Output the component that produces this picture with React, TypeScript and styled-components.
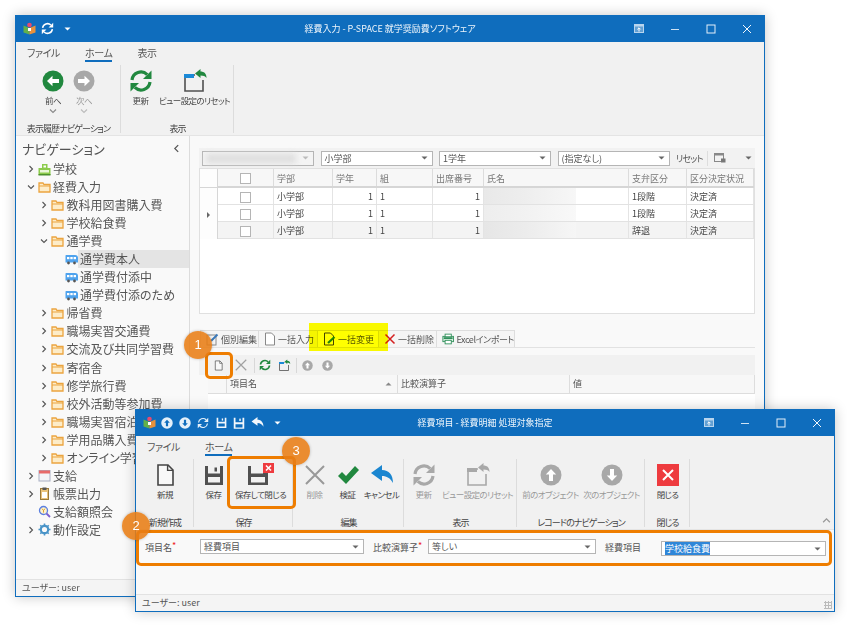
import React from 'react';
import styled, { createGlobalStyle } from 'styled-components';

const BLUE = '#0f6dbd';
const ORANGE = '#ee7d00';

const GlobalStyle = createGlobalStyle`
  html, body {
    margin: 0;
    padding: 0;
    background: #fff;
  }
  body {
    font-family: "Noto Sans CJK JP", "Noto Sans", sans-serif;
    font-feature-settings: "palt";
    color: #444;
    -webkit-font-smoothing: antialiased;
  }
`;

// Icons
//----------------------------------------------
const Logo = () => (
  <svg width="13" height="13" viewBox="0 0 13 13">
    <path d="M0.5 3.5 L6.5 6 V12.5 L0.5 10.5 Z" fill="#62b04a" />
    <path d="M12.5 3.5 L6.5 6 V12.5 L12.5 10.5 Z" fill="#e8913c" />
    <circle cx="6.5" cy="3" r="2.3" fill="#e84a6f" />
    <path d="M5 6 h3 v3 h-3 z" fill="#fff" />
  </svg>
);

const Refresh = ({ color = '#fff', size = 24, w = 3.2 }: { color?: string; size?: number; w?: number }) => (
  <svg width={size} height={size} viewBox="0 0 24 24" fill="none">
    <path d="M3 11 A9 9 0 0 1 18.2 5.6" stroke={color} strokeWidth={w} />
    <path d="M21 13 A9 9 0 0 1 5.8 18.4" stroke={color} strokeWidth={w} />
    <path d="M22.5 1.5 V10 H14 Z" fill={color} />
    <path d="M1.5 22.5 V14 H10 Z" fill={color} />
  </svg>
);

const ResetView = ({ color = '#505050', accent = '#1b8ad8', arrow = '#21883f', size = 26 }: { color?: string; accent?: string; arrow?: string; size?: number }) => (
  <svg width={size} height={size} viewBox="0 0 26 26" fill="none">
    <path d="M13 7 H3 V23 H21 V12" stroke={color} strokeWidth="1.6" />
    <rect x="2" y="6" width="10" height="4" fill={accent} />
    <path d="M13 5.5 L18.5 1 V3.6 C22 3.6 24.5 5.6 24.5 10 C23 8 21.5 7.4 18.5 7.4 V10 Z" fill={arrow} />
  </svg>
);

const ArrowCircle = ({ dir, color, size = 22, glyph = '#fff' }: { dir: 'left' | 'right' | 'up' | 'down'; color: string; size?: number; glyph?: string }) => {
  const rot = { left: 0, right: 180, up: 90, down: 270 }[dir];
  return (
    <svg width={size} height={size} viewBox="0 0 22 22">
      <circle cx="11" cy="11" r="10.5" fill={color} />
      <path
        d="M5 11 L10.5 5.8 V9 H17 V13 H10.5 V16.2 Z"
        fill={glyph}
        transform={`rotate(${rot} 11 11)`}
      />
    </svg>
  );
};

const DocIcon = ({ size = 24, color = '#444' }: { size?: number; color?: string }) => (
  <svg width={size} height={size} viewBox="0 0 24 24" fill="#f8f8f8">
    <path d="M5 2 H15 L20 7 V22 H5 Z" stroke={color} strokeWidth="1.6" />
    <path d="M14.6 2 V7.4 H20" stroke={color} strokeWidth="1.4" fill="none" />
  </svg>
);

const SaveIcon = ({ color = '#505050', size = 24 }: { color?: string; size?: number }) => (
  <svg width={size} height={size} viewBox="0 0 24 24">
    <path
      fillRule="evenodd"
      d="M3 3 H21 V22 H3 Z M6 3 H18 V10.5 H6 Z M6 14 V19.5 H18 V14 Z"
      fill={color}
    />
    <rect x="12.5" y="4.5" width="2.5" height="4" fill={color} />
  </svg>
);

const SaveCloseIcon = () => (
  <svg width="34" height="24" viewBox="0 0 34 24">
    <path
      fillRule="evenodd"
      d="M4 3 H24 V22 H4 Z M7 3 H19 V10.5 H7 Z M7 14 V19.5 H21 V14 Z"
      fill="#505050"
    />
    <rect x="19" y="0" width="11" height="10" fill="#ee3b3f" />
    <path d="M22 2.5 L27 7.5 M27 2.5 L22 7.5" stroke="#fff" strokeWidth="1.6" />
  </svg>
);

const CrossIcon = ({ color = '#999', size = 24, w = 2 }: { color?: string; size?: number; w?: number }) => (
  <svg width={size} height={size} viewBox="0 0 24 24">
    <path d="M3 3 L21 21 M21 3 L3 21" stroke={color} strokeWidth={w} fill="none" />
  </svg>
);

const CheckIcon = () => (
  <svg width="24" height="24" viewBox="0 0 24 24">
    <path d="M2 13 L6 9 L10 13 L19 3 L23 7 L10 21 Z" fill="#21883f" />
  </svg>
);

const UndoIcon = ({ color = '#1b86d0', size = 24 }: { color?: string; size?: number }) => (
  <svg width={size} height={size} viewBox="0 0 24 24">
    <path d="M1 10 L12 2 V7 C19 7 23 12 23 20 C20 15 17 13 12 13 V18 Z" fill={color} />
  </svg>
);

const CloseTile = () => (
  <svg width="22" height="22" viewBox="0 0 22 22">
    <rect width="22" height="22" fill="#ee3b3f" />
    <path d="M6 6 L16 16 M16 6 L6 16" stroke="#fff" strokeWidth="2" />
  </svg>
);

const Caret = ({ color = '#666', up }: { color?: string; up?: boolean }) => (
  <svg width="7" height="4" viewBox="0 0 7 4">
    <path d={up ? 'M0.5 3.5 H6.5 L3.5 0.5 Z' : 'M0.5 0.5 H6.5 L3.5 3.5 Z'} fill={color} />
  </svg>
);

const Chevron = ({ dir, color = '#555', size = 8 }: { dir: 'right' | 'down' | 'left' | 'up'; color?: string; size?: number }) => {
  const rot = { right: 0, down: 90, left: 180, up: 270 }[dir];
  return (
    <svg width={size} height={size} viewBox="0 0 8 8">
      <path
        d="M2.5 1 L5.5 4 L2.5 7"
        stroke={color}
        strokeWidth="1.1"
        fill="none"
        transform={`rotate(${rot} 4 4)`}
      />
    </svg>
  );
};

const Folder = () => (
  <svg width="13" height="12" viewBox="0 0 13 12">
    <path d="M1 2 H5 L6 3.5 H12 V11 H1 Z" fill="#fdecc8" stroke="#eba43f" strokeWidth="1.3" />
    <path d="M1 5 H12" stroke="#eba43f" strokeWidth="1" />
  </svg>
);

const Bus = () => (
  <svg width="13" height="11" viewBox="0 0 13 11">
    <path d="M1 1 H10 Q13 1 13 4 V8.5 H0.5 V1.5 Z" fill="#4fa3ee" />
    <rect x="2" y="3" width="2.4" height="2.2" fill="#fff" />
    <rect x="5.3" y="3" width="2.4" height="2.2" fill="#fff" />
    <rect x="8.6" y="3" width="2.4" height="2.2" fill="#fff" />
    <circle cx="3.5" cy="9" r="1.4" fill="#555" />
    <circle cx="9.5" cy="9" r="1.4" fill="#555" />
  </svg>
);

const School = () => (
  <svg width="13" height="13" viewBox="0 0 13 13">
    <rect x="0.5" y="5" width="12" height="7" fill="#8ccb4c" />
    <rect x="4" y="1" width="5.5" height="5" fill="#8ccb4c" />
    <rect x="5.5" y="2.5" width="2.5" height="2" fill="#fff" />
    <rect x="2" y="7" width="9" height="2.5" fill="#e9f6d8" />
    <rect x="0.5" y="11" width="12" height="1.5" fill="#4d8f2e" />
  </svg>
);

const Calendar = () => (
  <svg width="13" height="13" viewBox="0 0 13 13">
    <rect x="1" y="1.5" width="11" height="10.5" fill="#f4f4f8" stroke="#a9b0c4" />
    <rect x="1" y="1.5" width="11" height="3" fill="#e86a6a" />
  </svg>
);

const Clipboard = () => (
  <svg width="13" height="13" viewBox="0 0 13 13">
    <rect x="2.5" y="1.5" width="8" height="11" fill="#e9c27a" stroke="#9a7a3c" />
    <rect x="4.5" y="0.5" width="4" height="2.5" fill="#555" />
    <rect x="4" y="5" width="5" height="6" fill="#fff" />
  </svg>
);

const SearchYen = () => (
  <svg width="13" height="13" viewBox="0 0 13 13" fill="none">
    <circle cx="5.5" cy="5.5" r="4" stroke="#5b7fe0" strokeWidth="1.3" fill="#fdf3d0" />
    <path d="M8.5 8.5 L12 12" stroke="#7b5fd0" strokeWidth="1.8" />
    <path d="M4 3.6 L5.5 5.6 L7 3.6 M5.5 5.6 V7.6" stroke="#d99a20" strokeWidth="0.9" />
  </svg>
);

const Gear = () => (
  <svg width="13" height="13" viewBox="0 0 13 13" fill="none">
    <circle cx="6.5" cy="6.5" r="3.7" stroke="#4a94c8" strokeWidth="2.2" />
    <path d="M6.5 0.5 V2.5 M6.5 10.5 V12.5 M0.5 6.5 H2.5 M10.5 6.5 H12.5 M2.3 2.3 L3.7 3.7 M9.3 9.3 L10.7 10.7 M2.3 10.7 L3.7 9.3 M9.3 3.7 L10.7 2.3" stroke="#4a94c8" strokeWidth="1.6" />
  </svg>
);

const Restore = () => (
  <svg width="10" height="9" viewBox="0 0 10 9" fill="none">
    <rect x="0.5" y="0.5" width="9" height="8" fill="rgba(255,255,255,0.35)" stroke="#b9d5ee" />
    <rect x="0.5" y="0.5" width="9" height="2" fill="#b9d5ee" />
    <path d="M5 7.5 V4 M3.4 5.4 L5 3.8 L6.6 5.4" stroke="#fff" strokeWidth="1" />
  </svg>
);

const Minimize = () => (
  <svg width="10" height="10" viewBox="0 0 10 10">
    <path d="M1 5.5 H9" stroke="#cfe2f3" strokeWidth="1" />
  </svg>
);

const Maximize = () => (
  <svg width="10" height="10" viewBox="0 0 10 10" fill="none">
    <rect x="1" y="1" width="8" height="8" stroke="#e4eff9" />
  </svg>
);

const CloseGlyph = () => (
  <svg width="10" height="10" viewBox="0 0 10 10">
    <path d="M1 1 L9 9 M9 1 L1 9" stroke="#f2f7fc" strokeWidth="1" />
  </svg>
);

const LayoutIcon = () => (
  <svg width="12" height="10" viewBox="0 0 12 10" fill="none">
    <rect x="0.5" y="0.5" width="9" height="8" stroke="#888" />
    <rect x="0.5" y="0.5" width="9" height="2" fill="#888" />
    <rect x="7" y="5.5" width="4.5" height="4" fill="#777" />
  </svg>
);

const TabEditIcon = () => (
  <svg width="13" height="13" viewBox="0 0 13 13" fill="none">
    <rect x="1" y="2" width="9" height="10" stroke="#888" />
    <path d="M5 8 L11.5 1.5" stroke="#3a78b8" strokeWidth="2" />
  </svg>
);

const TabDocIcon = () => (
  <svg width="12" height="14" viewBox="0 0 12 14" fill="#fff">
    <path d="M1.5 1 H7.5 L10.5 4 V13 H1.5 Z" stroke="#888" />
  </svg>
);

const TabChangeIcon = () => (
  <svg width="13" height="14" viewBox="0 0 13 14" fill="none">
    <path d="M1.5 1 H7.5 L10.5 4 V13 H1.5 Z" stroke="#444" />
    <path d="M5 11 L11.5 5" stroke="#21883f" strokeWidth="2.2" />
  </svg>
);

const TabExcelIcon = () => (
  <svg width="14" height="12" viewBox="0 0 14 12" fill="none">
    <rect x="1" y="3" width="12" height="6" fill="#d9efe0" stroke="#2f8f5a" />
    <rect x="3.5" y="0.5" width="7" height="3" fill="#fff" stroke="#2f8f5a" />
    <rect x="3.5" y="7.5" width="7" height="4" fill="#fff" stroke="#2f8f5a" />
    <rect x="2" y="4" width="10" height="2" fill="#2f8f5a" />
  </svg>
);

// Stage and windows
//----------------------------------------------
const Stage = styled.div`
  position: relative;
  width: 847px;
  height: 627px;
  overflow: hidden;
  background: #fff;
`;

const Win = styled.section<{ $x: number; $y: number; $w: number; $h: number }>`
  position: absolute;
  left: ${(p) => p.$x}px;
  top: ${(p) => p.$y}px;
  width: ${(p) => p.$w}px;
  height: ${(p) => p.$h}px;
  box-sizing: border-box;
  border: 1px solid ${BLUE};
  border-top: 0;
  background: #f9f9f9;
  display: flex;
  flex-direction: column;
  box-shadow: 0 0 12px rgba(0, 0, 0, 0.22);
`;

const TitleBar = styled.header`
  position: relative;
  flex: 0 0 27px;
  margin: 0 -1px;
  background: ${BLUE};
  display: flex;
  align-items: center;
  padding-left: 5px;
  color: #fff;
`;

const TitleIcon = styled.span<{ $w?: number }>`
  width: ${(p) => p.$w ?? 18}px;
  height: 27px;
  display: flex;
  align-items: center;
  justify-content: center;
`;

const TitleText = styled.div`
  position: absolute;
  left: 0;
  right: 0;
  top: 0;
  line-height: 27px;
  text-align: center;
  font-size: 9px;
  color: #eef5fb;
`;

const WinControls = styled.div`
  margin-left: auto;
  display: flex;
`;

const WinButton = styled.span`
  width: 36px;
  height: 27px;
  display: flex;
  align-items: center;
  justify-content: center;
`;

const Ribbon = styled.div`
  flex: 0 0 94px;
  box-sizing: border-box;
  background: #f1f1f1;
  border-bottom: 1px solid #e4e4e4;
  position: relative;
`;

const RibbonTabs = styled.nav<{ $left: number }>`
  height: 20px;
  display: flex;
  align-items: flex-end;
  padding-left: ${(p) => p.$left}px;
  gap: 25px;
`;

const RibbonTab = styled.span<{ $on?: boolean }>`
  font-size: 10px;
  letter-spacing: -0.4px;
  line-height: 17px;
  height: 16px;
  color: #555;
  box-sizing: content-box;
  border-bottom: 2px solid ${(p) => (p.$on ? BLUE : 'transparent')};
`;

const Groups = styled.div`
  height: 73px;
  display: flex;
`;

const Group = styled.div<{ $w: number }>`
  width: ${(p) => p.$w}px;
  box-sizing: border-box;
  position: relative;
  display: flex;
  flex-direction: column;
  &::after {
    content: '';
    position: absolute;
    right: 0;
    top: 3px;
    bottom: 2px;
    width: 1px;
    background: #dcdcdc;
  }
`;

const GroupButtons = styled.div`
  flex: 1;
  display: flex;
  justify-content: center;
`;

const GroupLabel = styled.div`
  height: 12px;
  line-height: 12px;
  font-size: 9px;
  letter-spacing: -0.9px;
  text-align: center;
  white-space: nowrap;
  color: #444;
`;

const RButton = styled.div<{ $w: number; $dim?: boolean }>`
  width: ${(p) => p.$w}px;
  display: flex;
  flex-direction: column;
  align-items: center;
  padding-top: 7px;
  color: ${(p) => (p.$dim ? '#999' : '#444')};
  font-size: 8.5px;
  letter-spacing: -0.6px;
  line-height: 12px;
  white-space: nowrap;
`;

const RIcon = styled.div`
  height: 24px;
  display: flex;
  align-items: center;
  justify-content: center;
  margin-bottom: 1px;
`;

const RMore = styled.div`
  height: 8px;
  margin-top: 1px;
  display: flex;
  justify-content: center;
`;

const Collapse = styled.span`
  position: absolute;
  right: 3px;
  bottom: 4px;
  line-height: 0;
`;

const StatusBar = styled.footer`
  position: relative;
  flex: 0 0 17px;
  box-sizing: border-box;
  border-top: 1px solid #e2e2e2;
  background: #f4f4f4;
  font-size: 9px;
  line-height: 16px;
  padding-left: 6px;
  color: #555;
`;

const Grip = styled.span`
  position: absolute;
  right: 2px;
  bottom: 2px;
  width: 8px;
  height: 8px;
  background-image: radial-gradient(#bbb 1px, transparent 1.1px);
  background-size: 3px 3px;
`;

// Main window body
//----------------------------------------------
const Body = styled.div`
  flex: 1;
  min-height: 0;
  display: flex;
`;

const Side = styled.aside`
  flex: 0 0 174px;
  box-sizing: border-box;
  border-right: 1px solid #dcdcdc;
  background: #f9f9f9;
  overflow: hidden;
`;

const SideHead = styled.div`
  height: 24px;
  box-sizing: border-box;
  display: flex;
  align-items: center;
  justify-content: space-between;
  padding: 1px 8px 0 6px;
  font-size: 13px;
  line-height: 18px;
  color: #555;
`;

const TreeRow = styled.div<{ $level: number }>`
  height: 18.06px;
  display: flex;
  align-items: center;
  padding-left: ${(p) => 9 + p.$level * 13.5}px;
  font-size: 12px;
  white-space: nowrap;
  color: #555;
`;

const TreeArrow = styled.span`
  width: 11px;
  flex: none;
  display: flex;
  justify-content: center;
`;

const TreeIcon = styled.span`
  width: 14px;
  flex: none;
  margin-left: 1px;
  display: flex;
  justify-content: center;
`;

const TreeLabel = styled.span<{ $sel?: boolean }>`
  margin-left: 0;
  flex: 1;
  padding-left: 2px;
  line-height: 18px;
  background: ${(p) => (p.$sel ? '#e4e4e4' : 'transparent')};
`;

const Right = styled.main`
  flex: 1;
  min-width: 0;
  padding: 12px 9px 0 9px;
  background: #f9f9f9;
`;

const FilterBar = styled.div`
  height: 20px;
  background: #f2f2f2;
  display: flex;
  align-items: center;
  padding-left: 3px;
  gap: 6.5px;
`;

const Combo = styled.div<{ $w: number; $h?: number; $grey?: boolean; $mt?: number }>`
  width: ${(p) => p.$w}px;
  height: ${(p) => p.$h ?? 15}px;
  margin-top: ${(p) => p.$mt ?? 0}px;
  box-sizing: border-box;
  flex: none;
  border: 1px solid #b5b5b5;
  background: ${(p) => (p.$grey ? '#f4f4f4' : '#fff')};
  display: flex;
  align-items: center;
  justify-content: space-between;
  padding: 0 4px 0 3px;
  font-size: 9px;
  color: #555;
`;

const BlurBar = styled.span`
  width: 90px;
  height: 9px;
  background: #ddd;
  filter: blur(3px);
`;

const ResetText = styled.span`
  font-size: 9px;
  letter-spacing: -0.8px;
  color: #555;
  width: 24px;
  white-space: nowrap;
`;

const BarSep = styled.span`
  width: 1px;
  height: 15px;
  background: #ddd;
`;

const LayoutBtn = styled.span`
  flex: 1;
  display: flex;
  align-items: center;
  justify-content: space-between;
  padding-right: 3px;
`;

const GridBox = styled.div`
  height: 146px;
  box-sizing: border-box;
  border: 1px solid #e0e0e0;
  background: #fff;
  font-size: 9px;
`;

const GridRow = styled.div<{ $head?: boolean; $alt?: boolean }>`
  display: grid;
  grid-template-columns: 18px 56px 59px 44px 56px 51px 145px 58px 1fr;
  height: ${(p) => (p.$head ? 19 : 17)}px;
  box-sizing: border-box;
  background: ${(p) => (p.$head ? '#f7f7f7' : p.$alt ? '#f4f4f4' : '#fff')};
  border-bottom: ${(p) => (p.$head ? 2 : 1)}px solid ${(p) => (p.$head ? '#d6d6d6' : '#e2e2e2')};
`;

const Cell = styled.div<{ $align?: 'left' | 'right' | 'center'; $head?: boolean }>`
  box-sizing: border-box;
  border-right: 1px solid ${(p) => (p.$head ? '#dcdcdc' : '#e4e4e4')};
  padding: 2px 3px 0;
  text-align: ${(p) => p.$align ?? 'left'};
  line-height: 14px;
  white-space: nowrap;
  overflow: hidden;
  color: ${(p) => (p.$head ? '#777' : '#444')};
  display: flex;
  align-items: center;
  justify-content: ${(p) =>
    p.$align === 'right' ? 'flex-end' : p.$align === 'center' ? 'center' : 'flex-start'};
`;

const IndicatorCell = styled(Cell)`
  background: #fdfdfd;
  border-right: 1px solid #d6d6d6;
  margin-bottom: -1px;
`;

const Tick = styled.span`
  width: 9px;
  height: 9px;
  border: 1px solid #b5b5b5;
  background: #fff;
  display: block;
`;

const Pointer = styled.span`
  width: 0;
  height: 0;
  border-left: 3px solid #666;
  border-top: 3px solid transparent;
  border-bottom: 3px solid transparent;
`;

const NameBlur = styled.span<{ $o: number }>`
  display: block;
  width: 92px;
  height: 17px;
  margin: -2px 0 0 -3px;
  background: linear-gradient(90deg, #e6e6e6 0%, #ececec 45%, #f6f6f6 100%);
  opacity: ${(p) => p.$o};
`;

const TabStrip = styled.div`
  display: flex;
  margin-top: 16px;
  height: 17px;
  padding-left: 1px;
  border-bottom: 1px solid #e2e2e2;
`;

const DetailTab = styled.div<{ $w: number; $on?: boolean; $tight?: boolean }>`
  width: ${(p) => p.$w}px;
  box-sizing: border-box;
  display: flex;
  align-items: center;
  gap: 2px;
  padding-left: 5px;
  font-size: 9px;
  letter-spacing: ${(p) => (p.$tight ? '-0.4px' : '0')};
  color: #555;
  white-space: nowrap;
  background: ${(p) => (p.$on ? '#fff' : '#f5f5f5')};
  border: 1px solid #ddd;
  border-bottom: 0;
  margin-right: -1px;
`;

const ToolBar = styled.div`
  height: 20px;
  margin-top: 7px;
  background: #f1f1f1;
  display: flex;
  align-items: center;
  padding-left: 9px;
`;

const ToolIcon = styled.span<{ $w: number }>`
  width: ${(p) => p.$w}px;
  display: flex;
  justify-content: center;
`;

const ToolSep = styled.span`
  width: 1px;
  height: 15px;
  background: #d8d8d8;
`;

const SubHead = styled.div`
  margin-left: 9px;
  height: 19px;
  display: grid;
  grid-template-columns: 19px 171px 172px 1fr;
  box-sizing: border-box;
  border-bottom: 1px solid #ddd;
  background: #f7f7f7;
  font-size: 9px;
  color: #555;
`;

const SubCell = styled.div`
  border-right: 1px solid #ddd;
  padding-left: 3px;
  line-height: 18px;
  display: flex;
  justify-content: space-between;
  align-items: center;
  padding-right: 5px;
`;

const SubBody = styled.div`
  margin-left: 9px;
  height: 190px;
  background: #fff;
`;

// Second window form
//----------------------------------------------
const FormArea = styled.div`
  flex: 1;
  display: flex;
  align-items: flex-start;
  padding: 9px 9px 0 9px;
  background: #f9f9f9;
`;

const FieldLabel = styled.label<{ $w: number; $ml?: number }>`
  width: ${(p) => p.$w}px;
  margin-left: ${(p) => p.$ml ?? 0}px;
  flex: none;
  font-size: 9px;
  line-height: 17px;
  color: #555;
  white-space: nowrap;
`;

const Req = styled.em`
  color: #ee2222;
  font-style: normal;
  font-size: 9px;
  position: relative;
  top: -2px;
`;

const Selected = styled.span`
  background: #2f86d8;
  color: #fff;
`;

// Annotations
//----------------------------------------------
const Badge = styled.div<{ $x: number; $y: number }>`
  position: absolute;
  left: ${(p) => p.$x - 14}px;
  top: ${(p) => p.$y - 14}px;
  width: 28px;
  height: 28px;
  border-radius: 50%;
  background: rgba(232, 125, 20, 0.88);
  box-shadow: 0 0 3px rgba(0, 0, 0, 0.25);
  color: #fff;
  font: 13px/28px "Liberation Sans", sans-serif;
  text-align: center;
`;

const Mark = styled.div<{ $x: number; $y: number; $w: number; $h: number }>`
  position: absolute;
  left: ${(p) => p.$x}px;
  top: ${(p) => p.$y}px;
  width: ${(p) => p.$w}px;
  height: ${(p) => p.$h}px;
  box-sizing: border-box;
  border: 3px solid ${ORANGE};
  border-radius: 5px;
`;

const YellowMark = styled.div`
  position: absolute;
  left: 309px;
  top: 323px;
  width: 79px;
  height: 28px;
  background: #ffff00;
  mix-blend-mode: multiply;
`;

// Data
//----------------------------------------------
type NavItem = {
  label: string;
  level: number;
  arrow?: 'right' | 'down';
  icon: React.ReactNode;
  sel?: boolean;
};

const folder = <Folder />;
const bus = <Bus />;

const navItems: NavItem[] = [
  { label: '学校', level: 0, arrow: 'right', icon: <School /> },
  { label: '経費入力', level: 0, arrow: 'down', icon: folder },
  { label: '教科用図書購入費', level: 1, arrow: 'right', icon: folder },
  { label: '学校給食費', level: 1, arrow: 'right', icon: folder },
  { label: '通学費', level: 1, arrow: 'down', icon: folder },
  { label: '通学費本人', level: 2, icon: bus, sel: true },
  { label: '通学費付添中', level: 2, icon: bus },
  { label: '通学費付添のため', level: 2, icon: bus },
  { label: '帰省費', level: 1, arrow: 'right', icon: folder },
  { label: '職場実習交通費', level: 1, arrow: 'right', icon: folder },
  { label: '交流及び共同学習費', level: 1, arrow: 'right', icon: folder },
  { label: '寄宿舎', level: 1, arrow: 'right', icon: folder },
  { label: '修学旅行費', level: 1, arrow: 'right', icon: folder },
  { label: '校外活動等参加費', level: 1, arrow: 'right', icon: folder },
  { label: '職場実習宿泊費', level: 1, arrow: 'right', icon: folder },
  { label: '学用品購入費', level: 1, arrow: 'right', icon: folder },
  { label: 'オンライン学習', level: 1, arrow: 'right', icon: folder },
  { label: '支給', level: 0, arrow: 'right', icon: <Calendar /> },
  { label: '帳票出力', level: 0, arrow: 'right', icon: <Clipboard /> },
  { label: '支給額照会', level: 0, icon: <SearchYen /> },
  { label: '動作設定', level: 0, arrow: 'right', icon: <Gear /> },
];

const rows = [
  { pay: '1段階', blur: 0.9, alt: false, pointer: false },
  { pay: '1段階', blur: 0.7, alt: false, pointer: true },
  { pay: '辞退', blur: 1, alt: true, pointer: false },
];

const TreeItem: React.FC<{ item: NavItem }> = ({ item }) => (
  <TreeRow $level={item.level}>
    <TreeArrow>{item.arrow && <Chevron dir={item.arrow} />}</TreeArrow>
    <TreeIcon>{item.icon}</TreeIcon>
    <TreeLabel $sel={item.sel}>{item.label}</TreeLabel>
  </TreeRow>
);

const Controls = () => (
  <WinControls>
    <WinButton>
      <Restore />
    </WinButton>
    <WinButton>
      <Minimize />
    </WinButton>
    <WinButton>
      <Maximize />
    </WinButton>
    <WinButton>
      <CloseGlyph />
    </WinButton>
  </WinControls>
);

const MainWindow = () => (
  <Win $x={15} $y={15} $w={750} $h={582}>
    <TitleBar>
      <TitleText>経費入力 - P-SPACE 就学奨励費ソフトウェア</TitleText>
      <TitleIcon>
        <Logo />
      </TitleIcon>
      <TitleIcon>
        <Refresh size={13} w={2.8} />
      </TitleIcon>
      <TitleIcon $w={22}>
        <Caret color="#fff" />
      </TitleIcon>
      <Controls />
    </TitleBar>
    <Ribbon>
      <RibbonTabs $left={11}>
        <RibbonTab>ファイル</RibbonTab>
        <RibbonTab $on>ホーム</RibbonTab>
        <RibbonTab>表示</RibbonTab>
      </RibbonTabs>
      <Groups>
        <Group $w={105}>
          <GroupButtons>
            <RButton $w={31}>
              <RIcon>
                <ArrowCircle dir="left" color="#21883f" />
              </RIcon>
              前へ
              <RMore>
                <Chevron dir="down" color="#888" />
              </RMore>
            </RButton>
            <RButton $w={31} $dim>
              <RIcon>
                <ArrowCircle dir="right" color="#a8a8a8" />
              </RIcon>
              次へ
              <RMore>
                <Chevron dir="down" color="#bbb" />
              </RMore>
            </RButton>
          </GroupButtons>
          <GroupLabel>表示履歴ナビゲーション</GroupLabel>
        </Group>
        <Group $w={113}>
          <GroupButtons>
            <RButton $w={34}>
              <RIcon>
                <Refresh color="#21883f" />
              </RIcon>
              更新
            </RButton>
            <RButton $w={74}>
              <RIcon>
                <ResetView />
              </RIcon>
              ビュー設定のリセット
            </RButton>
          </GroupButtons>
          <GroupLabel>表示</GroupLabel>
        </Group>
      </Groups>
    </Ribbon>
    <Body>
      <Side>
        <SideHead>
          ナビゲーション
          <Chevron dir="left" size={9} />
        </SideHead>
        {navItems.map((item) => (
          <TreeItem key={item.label} item={item} />
        ))}
      </Side>
      <Right>
        <FilterBar>
          <Combo $w={112} $grey>
            <BlurBar />
            <Caret color="#bbb" />
          </Combo>
          <Combo $w={112}>
            小学部
            <Caret />
          </Combo>
          <Combo $w={112}>
            1学年
            <Caret />
          </Combo>
          <Combo $w={112}>
            (指定なし)
            <Caret />
          </Combo>
          <ResetText>リセット</ResetText>
          <BarSep />
          <LayoutBtn>
            <LayoutIcon />
            <Caret />
          </LayoutBtn>
        </FilterBar>
        <GridBox>
          <GridRow $head>
            <IndicatorCell />
            <Cell $head $align="center">
              <Tick />
            </Cell>
            <Cell $head>学部</Cell>
            <Cell $head>学年</Cell>
            <Cell $head>組</Cell>
            <Cell $head>出席番号</Cell>
            <Cell $head>氏名</Cell>
            <Cell $head>支弁区分</Cell>
            <Cell $head>区分決定状況</Cell>
          </GridRow>
          {rows.map((r, i) => (
            <GridRow key={i} $alt={r.alt}>
              <IndicatorCell $align="center">{r.pointer && <Pointer />}</IndicatorCell>
              <Cell $align="center">
                <Tick />
              </Cell>
              <Cell>小学部</Cell>
              <Cell $align="right">1</Cell>
              <Cell>1</Cell>
              <Cell $align="right">1</Cell>
              <Cell>
                <NameBlur $o={r.blur} />
              </Cell>
              <Cell>{r.pay}</Cell>
              <Cell>決定済</Cell>
            </GridRow>
          ))}
        </GridBox>
        <TabStrip>
          <DetailTab $w={59}>
            <TabEditIcon />
            個別編集
          </DetailTab>
          <DetailTab $w={60}>
            <TabDocIcon />
            一括入力
          </DetailTab>
          <DetailTab $w={62} $on>
            <TabChangeIcon />
            一括変更
          </DetailTab>
          <DetailTab $w={59}>
            <CrossIcon color="#d42020" size={12} w={3} />
            一括削除
          </DetailTab>
          <DetailTab $w={79} $tight>
            <TabExcelIcon />
            Excelインポート
          </DetailTab>
        </TabStrip>
        <ToolBar>
          <ToolIcon $w={20}>
            <DocIcon size={11} color="#555" />
          </ToolIcon>
          <ToolIcon $w={26}>
            <CrossIcon size={14} color="#a0a0a0" />
          </ToolIcon>
          <ToolSep />
          <ToolIcon $w={20}>
            <Refresh color="#21883f" size={12} w={3.4} />
          </ToolIcon>
          <ToolIcon $w={18}>
            <ResetView size={13} />
          </ToolIcon>
          <ToolIcon $w={3} />
          <ToolSep />
          <ToolIcon $w={20}>
            <ArrowCircle dir="up" color="#a8a8a8" size={11} />
          </ToolIcon>
          <ToolIcon $w={20}>
            <ArrowCircle dir="down" color="#a8a8a8" size={11} />
          </ToolIcon>
        </ToolBar>
        <SubHead>
          <SubCell />
          <SubCell>
            項目名
            <Caret color="#888" up />
          </SubCell>
          <SubCell>比較演算子</SubCell>
          <SubCell>値</SubCell>
        </SubHead>
        <SubBody />
      </Right>
    </Body>
    <StatusBar>ユーザー: user</StatusBar>
  </Win>
);

const DetailWindow = () => (
  <Win $x={135} $y={409} $w={700} $h={203}>
    <TitleBar>
      <TitleText>経費項目 - 経費明細 処理対象指定</TitleText>
      <TitleIcon>
        <Logo />
      </TitleIcon>
      <TitleIcon>
        <ArrowCircle dir="up" color="#e4f0fa" glyph={BLUE} size={12} />
      </TitleIcon>
      <TitleIcon>
        <ArrowCircle dir="down" color="#e4f0fa" glyph={BLUE} size={12} />
      </TitleIcon>
      <TitleIcon>
        <Refresh size={12} w={2.4} color="#e4f0fa" />
      </TitleIcon>
      <TitleIcon>
        <SaveIcon size={13} color="#f2f7fc" />
      </TitleIcon>
      <TitleIcon>
        <SaveIcon size={14} color="#f2f7fc" />
      </TitleIcon>
      <TitleIcon>
        <UndoIcon size={13} color="#f2f7fc" />
      </TitleIcon>
      <TitleIcon $w={22}>
        <Caret color="#fff" />
      </TitleIcon>
      <Controls />
    </TitleBar>
    <Ribbon>
      <RibbonTabs $left={11}>
        <RibbonTab>ファイル</RibbonTab>
        <RibbonTab $on>ホーム</RibbonTab>
      </RibbonTabs>
      <Groups>
        <Group $w={58}>
          <GroupButtons>
            <RButton $w={40}>
              <RIcon>
                <DocIcon />
              </RIcon>
              新規
            </RButton>
          </GroupButtons>
          <GroupLabel>新規作成</GroupLabel>
        </Group>
        <Group $w={99}>
          <GroupButtons>
            <RButton $w={34}>
              <RIcon>
                <SaveIcon />
              </RIcon>
              保存
            </RButton>
            <RButton $w={60}>
              <RIcon>
                <SaveCloseIcon />
              </RIcon>
              保存して閉じる
            </RButton>
          </GroupButtons>
          <GroupLabel>保存</GroupLabel>
        </Group>
        <Group $w={111}>
          <GroupButtons>
            <RButton $w={33} $dim>
              <RIcon>
                <CrossIcon />
              </RIcon>
              削除
            </RButton>
            <RButton $w={33}>
              <RIcon>
                <CheckIcon />
              </RIcon>
              検証
            </RButton>
            <RButton $w={35}>
              <RIcon>
                <UndoIcon />
              </RIcon>
              キャンセル
            </RButton>
          </GroupButtons>
          <GroupLabel>編集</GroupLabel>
        </Group>
        <Group $w={113}>
          <GroupButtons>
            <RButton $w={34} $dim>
              <RIcon>
                <Refresh color="#a8a8a8" />
              </RIcon>
              更新
            </RButton>
            <RButton $w={74} $dim>
              <RIcon>
                <ResetView color="#a8a8a8" accent="#a8a8a8" arrow="#a8a8a8" />
              </RIcon>
              ビュー設定のリセット
            </RButton>
          </GroupButtons>
          <GroupLabel>表示</GroupLabel>
        </Group>
        <Group $w={128}>
          <GroupButtons>
            <RButton $w={61} $dim>
              <RIcon>
                <ArrowCircle dir="up" color="#a8a8a8" />
              </RIcon>
              前のオブジェクト
            </RButton>
            <RButton $w={61} $dim>
              <RIcon>
                <ArrowCircle dir="down" color="#a8a8a8" />
              </RIcon>
              次のオブジェクト
            </RButton>
          </GroupButtons>
          <GroupLabel>レコードのナビゲーション</GroupLabel>
        </Group>
        <Group $w={45}>
          <GroupButtons>
            <RButton $w={40}>
              <RIcon>
                <CloseTile />
              </RIcon>
              閉じる
            </RButton>
          </GroupButtons>
          <GroupLabel>閉じる</GroupLabel>
        </Group>
      </Groups>
      <Collapse>
        <Chevron dir="up" color="#999" size={9} />
      </Collapse>
    </Ribbon>
    <FormArea>
      <FieldLabel $w={55}>
        項目名<Req>*</Req>
      </FieldLabel>
      <Combo $w={164}>
        経費項目
        <Caret />
      </Combo>
      <FieldLabel $w={55} $ml={9}>
        比較演算子<Req>*</Req>
      </FieldLabel>
      <Combo $w={168}>
        等しい
        <Caret />
      </Combo>
      <FieldLabel $w={56} $ml={9}>
        経費項目
      </FieldLabel>
      <Combo $w={165} $h={15} $mt={2}>
        <Selected>学校給食費</Selected>
        <Caret />
      </Combo>
    </FormArea>
    <StatusBar>
      ユーザー: user
      <Grip />
    </StatusBar>
  </Win>
);

const App: React.FC = () => (
  <Stage>
    <GlobalStyle />
    <MainWindow />
    <YellowMark />
    <Mark $x={205} $y={352} $w={28} $h={27} />
    <Badge $x={198} $y={345}>
      1
    </Badge>
    <DetailWindow />
    <Mark $x={227} $y={456} $w={69} $h={53} />
    <Mark $x={136} $y={530} $w={696} $h={36} />
    <Badge $x={296} $y={451}>
      3
    </Badge>
    <Badge $x={136} $y={526}>
      2
    </Badge>
  </Stage>
);

export default App;
